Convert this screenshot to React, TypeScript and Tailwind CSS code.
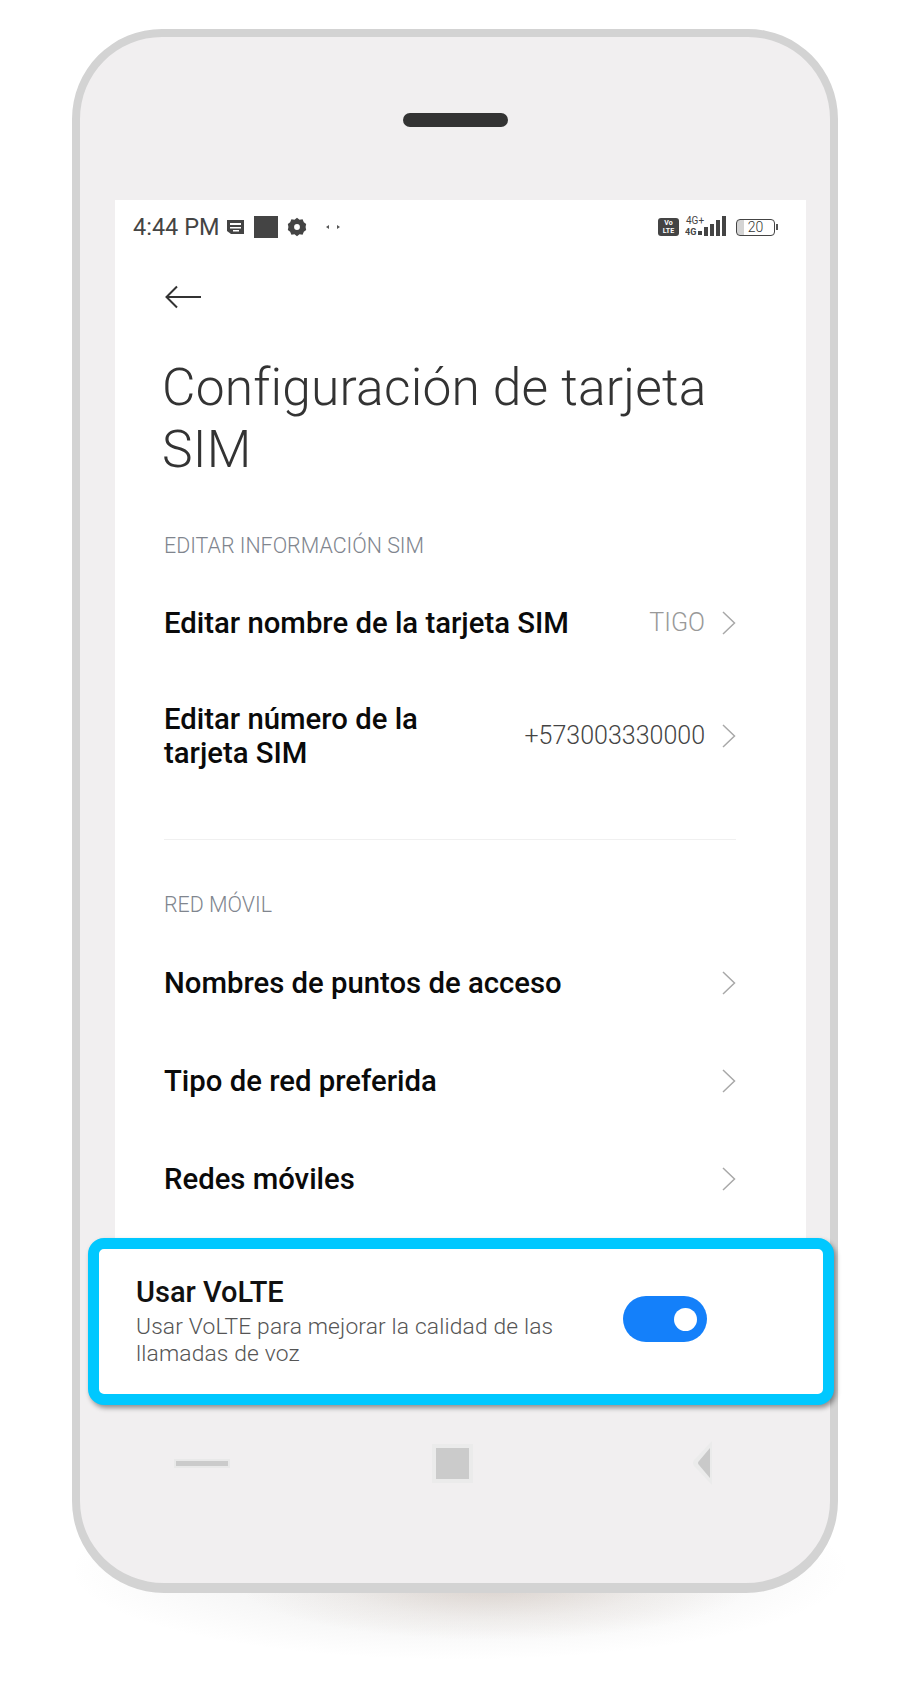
import React from 'react';

interface RowProps {
  label: React.ReactNode;
  value?: string;
  valueClass?: string;
  heightClass?: string;
}

const Chevron = () => (
  <svg width="14" height="24" viewBox="0 0 14 24" fill="none" stroke="#a8a8a8" strokeWidth="1.500" className="ml-[17px]">
    <path d="M1 1l11.500 11L1 23" />
  </svg>
);

const Row: React.FC<RowProps> = ({ label, value, valueClass, heightClass = 'h-[98px]' }) => (
  <div className={`flex items-center justify-between ${heightClass}`}>
    <div className="text-[29.3px] leading-[34px] font-medium text-[#0a0a0a]">{label}</div>
    <div className="flex items-center">
      {value && <span className={`text-[25px] font-light -ml-px ${valueClass}`}>{value}</span>}
      <Chevron />
    </div>
  </div>
);

const SectionLabel: React.FC<{ children: React.ReactNode; className?: string }> = ({ children, className }) => (
  <div className={`h-[30px] flex items-center text-[21.4px] font-light text-[#80858e] ${className}`}>{children}</div>
);

const StatusBar = () => (
  <div className="h-[54px] pl-[18px] pr-[28px] flex items-center justify-between text-[#444]">
    <div className="flex items-center">
      <span className="text-[23.5px] leading-none mt-px">4:44 PM</span>
      <svg width="17" height="16" viewBox="0 0 17 16" className="ml-[8px]">
        <path d="M0 1h17v14H4l-4-3z" fill="#444" />
        <path d="M3 4h11v2H3zM3 8h11v1.600H3zM6 11h6v1.600H6z" fill="#fff" />
      </svg>
      <div className="w-[24px] h-[22px] bg-[#444] ml-[10px]" />
      <svg width="20" height="20" viewBox="0 0 24 24" className="ml-[9px]">
        <path
          fillRule="evenodd"
          d="M12 1l3 2.200 3.700-.4 1.500 3.400L23 8.400 22.300 12l.7 3.600-2.800 2.200-1.500 3.400-3.700-.4L12 23l-3-2.200-3.700.4-1.500-3.400L1 15.600 1.700 12 1 8.400l2.800-2.200 1.500-3.400 3.700.4zM12 8.500a3.500 3.500 0 100 7 3.500 3.500 0 000-7z"
          fill="#444"
        />
      </svg>
      <svg width="14" height="6" viewBox="0 0 14 6" className="ml-[19px]">
        <path d="M0 3l3-2v4zM14 3l-3-2v4z" fill="#555" />
      </svg>
    </div>
    <div className="flex items-center">
      <div className="w-[21px] h-[18px] rounded-[3px] bg-[#444] text-white text-[7px] leading-[8px] font-bold text-center flex flex-col justify-center">
        <span>Vo</span>
        <span>LTE</span>
      </div>
      <svg width="42" height="24" viewBox="0 0 42 24" className="ml-[6px]">
        <text x="1" y="9" fontSize="10" fontFamily="Roboto" fill="#444">4G+</text>
        <text x="0" y="20" fontSize="9" fontWeight="700" fontFamily="Roboto" fill="#444">4G</text>
        <rect x="13" y="16" width="4" height="4" fill="#444" />
        <rect x="19" y="12" width="4" height="9" fill="#444" />
        <rect x="25" y="9" width="4" height="12" fill="#444" />
        <rect x="31" y="5" width="4" height="16" fill="#444" />
        <rect x="37" y="1" width="4" height="20" fill="#444" />
      </svg>
      <div className="ml-[9px] w-[39px] h-[17px] border border-[#444] rounded-[4px] text-[14px] leading-[15px] text-center font-light text-[#333] bg-[linear-gradient(90deg,#d4d4d4_0,#d4d4d4_7px,#fff_7px)]">
        20
      </div>
      <div className="w-[2px] h-[6px] bg-[#555] ml-[1px]" />
    </div>
  </div>
);

const VolteCard = () => (
  <div className="relative z-10 h-[167px] -ml-[27px] -mr-[28px] mt-[10px] border-[11px] border-[#00c8ff] rounded-[16px] bg-white shadow-[2px_3px_5px_rgba(0,0,0,0.4)] flex items-center justify-between pl-[37px] pr-[116px]">
    <div>
      <div className="text-[29px] leading-[32px] font-medium text-[#111]">Usar VoLTE</div>
      <div className="mt-[5px] text-[22.8px] leading-[27px] font-light text-[#555] tracking-[0.15px]">
        Usar VoLTE para mejorar la calidad de las
        <br />
        llamadas de voz
      </div>
    </div>
    <div className="w-[84px] h-[46px] rounded-full bg-[#1480fa] flex items-center justify-end pr-[10px] -mt-[5px]">
      <div className="w-[23px] h-[23px] rounded-full bg-white" />
    </div>
  </div>
);

const NavBar = () => (
  <div className="flex items-center justify-between h-[116px] pl-[61px] pr-[92px]">
    <div className="w-[52px] h-[5px] bg-[#cbcbcb] shadow-[0_0_0_2px_#e9e9e9]" />
    <div className="w-[33px] h-[31px] bg-[#cbcbcb] shadow-[0_0_0_4px_#ebebeb] mr-[14px]" />
    <svg width="24" height="48" viewBox="0 0 24 48">
      <path d="M22 2v44L4 27q-2-3 0-6z" fill="#ebebeb" />
      <path d="M20 9v30L9 26q-2-2 0-4z" fill="#c9c9c9" />
    </svg>
  </div>
);

export default function App() {
  return (
    <div className="relative w-[923px] h-[1694px] bg-white overflow-hidden pt-[29px] pl-[72px] font-['Roboto',sans-serif]">
      {/* sombra debajo del telefono */}
      <div className="absolute left-[70px] top-[1480px] w-[780px] h-[180px] bg-[radial-gradient(closest-side,rgba(120,120,120,0.12),rgba(120,120,120,0.06)_65%,rgba(255,255,255,0)_100%)]" />
      <div className="absolute left-[240px] top-[1530px] w-[510px] h-[110px] bg-[radial-gradient(closest-side,rgba(150,120,100,0.26),rgba(150,120,100,0.08)_60%,rgba(255,255,255,0)_100%)]" />

      <div className="relative w-[766px] h-[1564px] bg-[#f1eff0] border-[#d3d3d3] border-t-[8px] border-x-[8px] border-b-[10px] rounded-t-[90px] rounded-b-[92px] pt-[163px] pl-[35px] pr-[24px]">
        {/* altavoz */}
        <div className="absolute left-[323px] top-[76px] w-[105px] h-[14px] rounded-full bg-[#333]" />

        <div className="bg-white h-[1205px]">
          <StatusBar />

          <div className="h-[86px] pl-[50px] flex items-center">
            <svg width="36" height="24" viewBox="0 0 36 24" fill="none" stroke="#333" strokeWidth="2">
              <path d="M36 12H2M12 1.500L1.500 12 12 22.500" />
            </svg>
          </div>

          <div className="pl-[47px] pr-[40px] mt-[17px]">
            <h1 className="text-[51.5px] leading-[62px] font-light text-[#333] tracking-[0.2px]">
              Configuración de tarjeta
              <br />
              SIM
            </h1>
          </div>

          <div className="pl-[49px] pr-[70px] -mt-[1px]">
            <SectionLabel className="mt-[51px]">EDITAR INFORMACIÓN SIM</SectionLabel>
            <Row label="Editar nombre de la tarjeta SIM" value="TIGO" valueClass="text-[#999]" heightClass="h-[124px]" />
            <Row
              label={
                <>
                  Editar número de la
                  <br />
                  tarjeta SIM
                </>
              }
              value="+573003330000"
              valueClass="text-[#444]"
              heightClass="h-[102px]"
            />
            <div className="h-px bg-[#f0f0f0] mt-[52px]" />
            <SectionLabel className="mt-[50px]">RED MÓVIL</SectionLabel>
            <div className="mt-[14px]">
              <Row label="Nombres de puntos de acceso" />
              <Row label="Tipo de red preferida" />
              <Row label="Redes móviles" />
            </div>
          </div>

          <VolteCard />
        </div>

        <NavBar />
      </div>
    </div>
  );
}
